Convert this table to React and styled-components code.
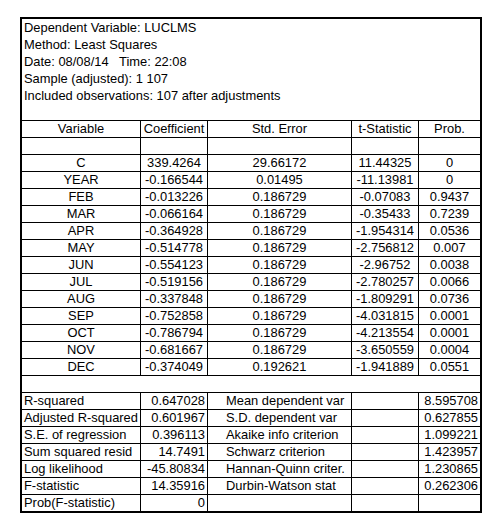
import styled, { createGlobalStyle } from "styled-components";

//------------------------------------------------------------------->

const GlobalStyle = createGlobalStyle`
  body {
    margin: 0;
    background: #fff;
  }
`;

const Sheet = styled.div`
  box-sizing: border-box;
  width: 462px;
  margin: 17px 0 0 20px;
  border: 2px solid #000;
  background: #fff;
  color: #000;
  font-family: "Liberation Sans", Arial, sans-serif;
  font-size: 12.9px;
`;

const Info = styled.div`
  height: 101px;
  padding-left: 2px;
`;

const InfoLine = styled.div`
  height: 17px;
  line-height: 17px;
  white-space: pre;
`;

const Row = styled.div`
  box-sizing: border-box;
  display: grid;
  grid-template-columns: 118px 67px 144px 67px 62px;
  height: 17px;
  border-top: 1px solid #000;
`;

const Spacer = styled.div`
  box-sizing: border-box;
  height: 17px;
  border-top: 1px solid #000;
`;

const Cell = styled.div`
  line-height: 16px;
  white-space: nowrap;
  text-align: ${({ $align }) => $align || "center"};
  padding-left: ${({ $padL }) => $padL || 0}px;
  padding-right: ${({ $padR }) => $padR || 0}px;

  & + & {
    border-left: 1px solid #000;
  }
`;

//------------------------------------------------------------------->

const info = [
  "Dependent Variable: LUCLMS",
  "Method: Least Squares",
  "Date: 08/08/14   Time: 22:08",
  "Sample (adjusted): 1 107",
  "Included observations: 107 after adjustments",
];

const coefs = [
  ["C", "339.4264", "29.66172", "11.44325", "0"],
  ["YEAR", "-0.166544", "0.01495", "-11.13981", "0"],
  ["FEB", "-0.013226", "0.186729", "-0.07083", "0.9437"],
  ["MAR", "-0.066164", "0.186729", "-0.35433", "0.7239"],
  ["APR", "-0.364928", "0.186729", "-1.954314", "0.0536"],
  ["MAY", "-0.514778", "0.186729", "-2.756812", "0.007"],
  ["JUN", "-0.554123", "0.186729", "-2.96752", "0.0038"],
  ["JUL", "-0.519156", "0.186729", "-2.780257", "0.0066"],
  ["AUG", "-0.337848", "0.186729", "-1.809291", "0.0736"],
  ["SEP", "-0.752858", "0.186729", "-4.031815", "0.0001"],
  ["OCT", "-0.786794", "0.186729", "-4.213554", "0.0001"],
  ["NOV", "-0.681667", "0.186729", "-3.650559", "0.0004"],
  ["DEC", "-0.374049", "0.192621", "-1.941889", "0.0551"],
];

const stats = [
  ["R-squared", "0.647028", "Mean dependent var", "8.595708"],
  ["Adjusted R-squared", "0.601967", "S.D. dependent var", "0.627855"],
  ["S.E. of regression", "0.396113", "Akaike info criterion", "1.099221"],
  ["Sum squared resid", "14.7491", "Schwarz criterion", "1.423957"],
  ["Log likelihood", "-45.80834", "Hannan-Quinn criter.", "1.230865"],
  ["F-statistic", "14.35916", "Durbin-Watson stat", "0.262306"],
  ["Prob(F-statistic)", "0", "", ""],
];

function App() {
  return (
    <>
      <GlobalStyle />
      <Sheet>
        <Info>
          {info.map((line) => (
            <InfoLine key={line}>{line}</InfoLine>
          ))}
        </Info>
        <Row>
          <Cell>Variable</Cell>
          <Cell>Coefficient</Cell>
          <Cell>Std. Error</Cell>
          <Cell>t-Statistic</Cell>
          <Cell>Prob.</Cell>
        </Row>
        <Row>
          <Cell />
          <Cell />
          <Cell />
          <Cell />
          <Cell />
        </Row>
        {coefs.map((r) => (
          <Row key={r[0]}>
            {r.map((v, i) => (
              <Cell key={i}>{v}</Cell>
            ))}
          </Row>
        ))}
        <Spacer />
        {stats.map(([l1, v1, l2, v2]) => (
          <Row key={l1}>
            <Cell $align="left" $padL={2}>
              {l1}
            </Cell>
            <Cell $align="right" $padR={2}>
              {v1}
            </Cell>
            <Cell $align="left" $padL={18}>
              {l2}
            </Cell>
            <Cell />
            <Cell $align="right" $padR={2}>
              {v2}
            </Cell>
          </Row>
        ))}
      </Sheet>
    </>
  );
}

export default App;
